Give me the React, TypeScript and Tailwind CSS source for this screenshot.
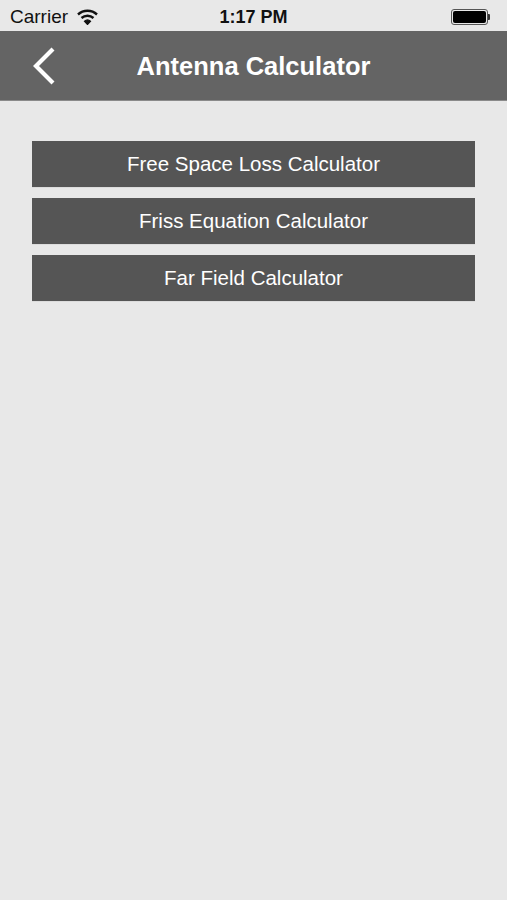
import React from "react";

export default function App() {
  const items = ["Free Space Loss Calculator", "Friss Equation Calculator", "Far Field Calculator"];
  return (
    <div className="w-[507px] h-[900px] bg-[#e8e8e8] flex flex-col" style={{ fontFamily: "'Liberation Sans', Arial, sans-serif" }}>
      <div className="h-[31px] flex items-center px-[10px] pt-[2px] relative text-[#111]">
        <span className="text-[19px] leading-none">Carrier</span>
        <svg className="ml-[9px]" width="21" height="16" viewBox="0 0 21 16">
          <path d="M1 5.5 A14 14 0 0 1 20 5.5" fill="none" stroke="#111" strokeWidth="2.4" />
          <path d="M4.5 9 A9 9 0 0 1 16.5 9" fill="none" stroke="#111" strokeWidth="2.4" />
          <path d="M7.5 12.3 A4.5 4.5 0 0 1 13.5 12.3 L10.5 15.5 Z" fill="#111" stroke="#111" strokeWidth="1.2" />
        </svg>
        <span className="absolute left-0 right-0 text-center text-[18px] font-bold leading-none pointer-events-none">1:17 PM</span>
        <div className="ml-auto mr-[7px] flex items-center">
          <div className="w-[37px] h-[16px] rounded-[3px] border border-[#555] p-[1px]">
            <div className="w-full h-full bg-black rounded-[2px]" />
          </div>
          <div className="w-[2px] h-[6px] bg-[#333] rounded-r-[1px]" />
        </div>
      </div>
      <div className="h-[70px] bg-[#646464] border-b border-[#8a8a8a] flex items-center relative">
        <svg className="absolute left-[31px] top-[16px]" width="26" height="38" viewBox="0 0 26 38">
          <path d="M22 2 L5 19 L22 36" fill="none" stroke="#fff" strokeWidth="4.2" strokeLinecap="butt" />
        </svg>
        <div className="w-full text-center text-white font-bold text-[25.5px] leading-none pt-[2px]">Antenna Calculator</div>
      </div>
      <div className="px-[32px] pt-[40px] flex flex-col gap-[10px]">
        {items.map((t) => (
          <div key={t} className="h-[47px] bg-[#555555] border-b border-[#dcdcdc] flex items-center justify-center text-white text-[20.5px]">
            {t}
          </div>
        ))}
      </div>
    </div>
  );
}
